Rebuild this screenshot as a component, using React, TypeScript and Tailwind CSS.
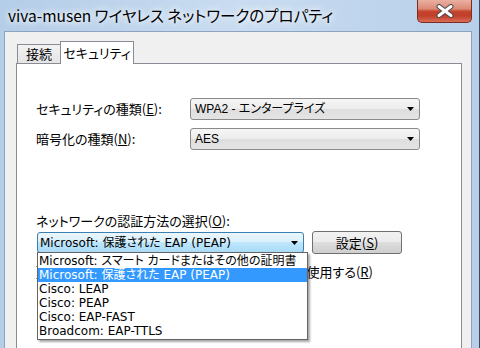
import React from 'react';

const jp = "font-['Noto_Sans_CJK_JP',sans-serif] [font-feature-settings:'palt']";
const listFont = "font-['DejaVu_Sans','Noto_Sans_CJK_JP',sans-serif] [font-feature-settings:'palt']";
const selFont = "font-['Liberation_Sans','Noto_Sans_CJK_JP',sans-serif] [font-feature-settings:'palt']";

function Arrow() {
  return (
    <svg width="7" height="4" viewBox="0 0 7 4">
      <path d="M0 0h7L3.5 4z" fill="#000" />
    </svg>
  );
}

function Select({ value }: { value: string }) {
  return (
    <div className="flex h-[22px] w-[230px] items-center justify-between rounded-[3px] border border-[#8a8a8a] bg-[linear-gradient(#f6f6f6,#ececec_50%,#dedede_50%,#e4e4e4)] pl-[4px] pr-[5px]">
      <span className={`${selFont} text-[12px] text-black`}>{value}</span>
      <Arrow />
    </div>
  );
}

const items = [
  'Microsoft: スマート カードまたはその他の証明書',
  'Microsoft: 保護された EAP (PEAP)',
  'Cisco: LEAP',
  'Cisco: PEAP',
  'Cisco: EAP-FAST',
  'Broadcom: EAP-TTLS',
];

export default function App() {
  return (
    <div className="flex h-[348px] w-[480px] flex-col overflow-hidden border-r border-r-[#3d4b5e] bg-[linear-gradient(90deg,#b4cde8,#c9dcf1_50%,#b7cfe9)]">
      {/* title bar */}
      <div className="flex h-[31px] shrink-0 items-start">
        <div className={`${jp} pl-[8px] pt-[5px] text-[15.5px] leading-[20px] text-black [text-shadow:0_0_6px_#fff,0_0_10px_#fff]`}>
          viva-musen ワイヤレス ネットワークのプロパティ
        </div>
        <button className="ml-auto mr-[7px] flex h-[23px] w-[55px] items-center justify-center rounded-b-[5px] border border-t-0 border-[#7b2d22] bg-[linear-gradient(#eab0a2,#dc8a76_40%,#c6432e_52%,#c13f2b_72%,#d86e56)]">
          <svg width="18" height="14" viewBox="0 0 18 14">
            <path d="M3 2.5L15 11.5M15 2.5L3 11.5" stroke="#4a4a4a" strokeWidth="5" strokeLinecap="round" />
            <path d="M3 2.5L15 11.5M15 2.5L3 11.5" stroke="#fff" strokeWidth="3" strokeLinecap="round" />
          </svg>
        </button>
      </div>

      {/* client area */}
      <div className="ml-[4px] mr-[7px] flex flex-1 flex-col border border-b-0 border-[#8ea3bd] bg-[#f0f0f0] pl-[11px] pr-[9px] pt-[9px]">
        {/* tabs */}
        <div className="flex h-[22px] items-end">
          <div className={`${jp} ml-[1px] flex h-[19px] w-[44px] items-center justify-center border border-b-0 border-[#898c95] bg-[linear-gradient(#f2f2f2,#e4e4e4)] text-[13px] text-black`}>
            接続
          </div>
          <div className={`${jp} z-10 -mb-px -ml-px flex h-[23px] w-[74px] items-center justify-center border border-b-0 border-[#898c95] bg-white text-[13px] text-black`}>
            セキュリティ
          </div>
        </div>

        {/* panel */}
        <div className={`${jp} flex flex-1 flex-col border border-b-0 border-[#898c95] bg-white pl-[19px] text-[13px] text-black`}>
          <div className="mt-[34px] flex items-center">
            <div className="w-[154px]">
              セキュリティの種類(<span className="underline">E</span>):
            </div>
            <Select value="WPA2 - エンタープライズ" />
          </div>
          <div className="mt-[8px] flex items-center">
            <div className="w-[154px]">
              暗号化の種類(<span className="underline">N</span>):
            </div>
            <Select value="AES" />
          </div>

          <div className="mt-[63px] h-[16px] leading-[16px]">
            ネットワークの認証方法の選択(<span className="underline">O</span>):
          </div>

          <div className="mt-[2px] flex items-start">
            <div className="relative ml-[1px] mt-[1px]">
              <div className="flex h-[21px] w-[267px] items-center justify-between rounded-[3px] border border-[#3c7fb1] bg-[linear-gradient(#eaf6fd,#d9f0fc_50%,#bee6fd_50%,#a9dbf6)] pl-[2px] pr-[5px]">
                <span className={`${listFont} text-[12px] text-black`}>Microsoft: 保護された EAP (PEAP)</span>
                <Arrow />
              </div>
              {/* open dropdown list */}
              <div className="absolute left-0 top-[20px] z-20 w-[271px] border border-[#646464] bg-white py-[1px] shadow-[2px_2px_2px_rgba(0,0,0,0.35)]">
                {items.map((t, i) => (
                  <div
                    key={t}
                    className={`${listFont} h-[14px] whitespace-nowrap pl-[1px] text-[12px] leading-[14px] ${
                      i === 1 ? 'bg-[#3399ff] text-white' : 'text-black'
                    }`}
                  >
                    {t}
                  </div>
                ))}
              </div>
            </div>
            <button className="ml-[8px] flex h-[23px] w-[90px] items-center justify-center rounded-[3px] border border-[#707070] bg-[linear-gradient(#f2f2f2,#ebebeb_50%,#dddddd_50%,#cfcfcf)] text-[13px]">
              設定(<span className="underline">S</span>)
            </button>
          </div>

          <div className="mt-[10px] flex h-[16px] w-[337px] items-center justify-end gap-[4px] overflow-hidden whitespace-nowrap leading-[16px]">
            <span className="h-[13px] w-[13px] shrink-0 border border-[#8e8f8f] bg-white" />
            <span>ログオンするたびに、この接続用の資格情報を使用する(<span className="underline">R</span>)</span>
          </div>
        </div>
      </div>
    </div>
  );
}
